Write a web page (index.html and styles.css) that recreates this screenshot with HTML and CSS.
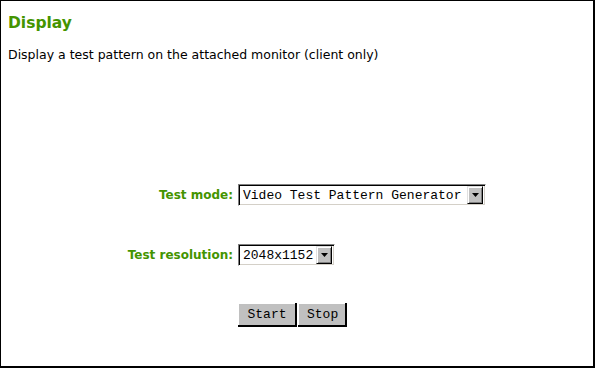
FILE: index.html
```html
<!DOCTYPE html>
<html>
<head>
<meta charset="utf-8">
<link rel="stylesheet" href="styles.css">
</head>
<body>
<div class="frame">
  <h1 class="title">Display</h1>
  <p class="desc">Display a test pattern on the attached monitor (client only)</p>
  <div class="form">
    <div class="row row-mode">
      <label class="label">Test mode:</label>
      <div class="select select-wide">
        <span class="select-text">Video Test Pattern Generator</span>
        <span class="arrow"><svg width="7" height="4" viewBox="0 0 7 4"><path d="M0 0H7L3.5 4Z" fill="#000"/></svg></span>
      </div>
    </div>
    <div class="row row-res">
      <label class="label">Test resolution:</label>
      <div class="select">
        <span class="select-text">2048x1152</span>
        <span class="arrow"><svg width="7" height="4" viewBox="0 0 7 4"><path d="M0 0H7L3.5 4Z" fill="#000"/></svg></span>
      </div>
    </div>
    <div class="row row-btn">
      <span></span>
      <div class="buttons">
        <button class="btn btn-start">Start</button>
        <button class="btn btn-stop">Stop</button>
      </div>
    </div>
  </div>
</div>
</body>
</html>
```

FILE: styles.css
```css
html, body {
  margin: 0;
  padding: 0;
  background: #fff;
}
.frame {
  box-sizing: border-box;
  width: 595px;
  height: 368px;
  border-top: 1px solid #000;
  border-left: 1px solid #000;
  border-right: 2px solid #000;
  border-bottom: 2px solid #000;
  padding: 0 7px;
  font-family: "DejaVu Sans", Verdana, sans-serif;
}
.title {
  margin: 0;
  padding-top: 12px;
  font-size: 15.5px;
  line-height: 20px;
  font-weight: bold;
  color: #449400;
}
.desc {
  margin: 14px 0 0 0;
  font-size: 12.5px;
  line-height: 16px;
  color: #000;
}
.form {
  display: grid;
  grid-template-columns: 225px auto;
  column-gap: 5px;
  margin-top: 121px;
}
.row {
  display: contents;
}
.label {
  justify-self: end;
  align-self: center;
  font-size: 12px;
  font-weight: bold;
  color: #449400;
}
.select {
  justify-self: start;
  display: flex;
  align-items: center;
  height: 22px;
  box-sizing: border-box;
  border-top: 1px solid #808080;
  border-left: 1px solid #808080;
  border-right: 1px solid #fff;
  border-bottom: 1px solid #fff;
  box-shadow: inset 1px 1px 0 #000, inset -1px -1px 0 #d4d0c8;
  background: #fff;
  padding: 2px 2px 2px 4px;
  font-family: "Liberation Mono", "Courier New", monospace;
  font-size: 13px;
}
.select-wide { min-width: 248px; justify-content: space-between; }
.select-text {
  padding-right: 3px;
}
.arrow {
  box-sizing: border-box;
  width: 16px;
  height: 18px;
  background: #c0c0c0;
  border-top: 1px solid #e0e0e0;
  border-left: 1px solid #e0e0e0;
  border-right: 1px solid #000;
  border-bottom: 1px solid #000;
  box-shadow: inset 1px 1px 0 #fff, inset -1px -1px 0 #808080;
  display: flex;
  align-items: center;
  justify-content: center;
}
.row-res .label, .row-res .select { margin-top: 38px; }
.row-btn .buttons { margin-top: 37px; }
.buttons {
  display: flex;
  gap: 1px;
}
.btn {
  box-sizing: border-box;
  height: 24px;
  margin: 0;
  background: #c0c0c0;
  border: none;
  border-right: 2px solid #000;
  border-bottom: 2px solid #000;
  box-shadow: inset 1px 1px 0 #fff;
  font-family: "Liberation Mono", "Courier New", monospace;
  font-size: 13px;
  color: #000;
  padding: 0 8px 0 9px;
}
.btn-start { width: 59px; }
.btn-stop { width: 49px; }
```
